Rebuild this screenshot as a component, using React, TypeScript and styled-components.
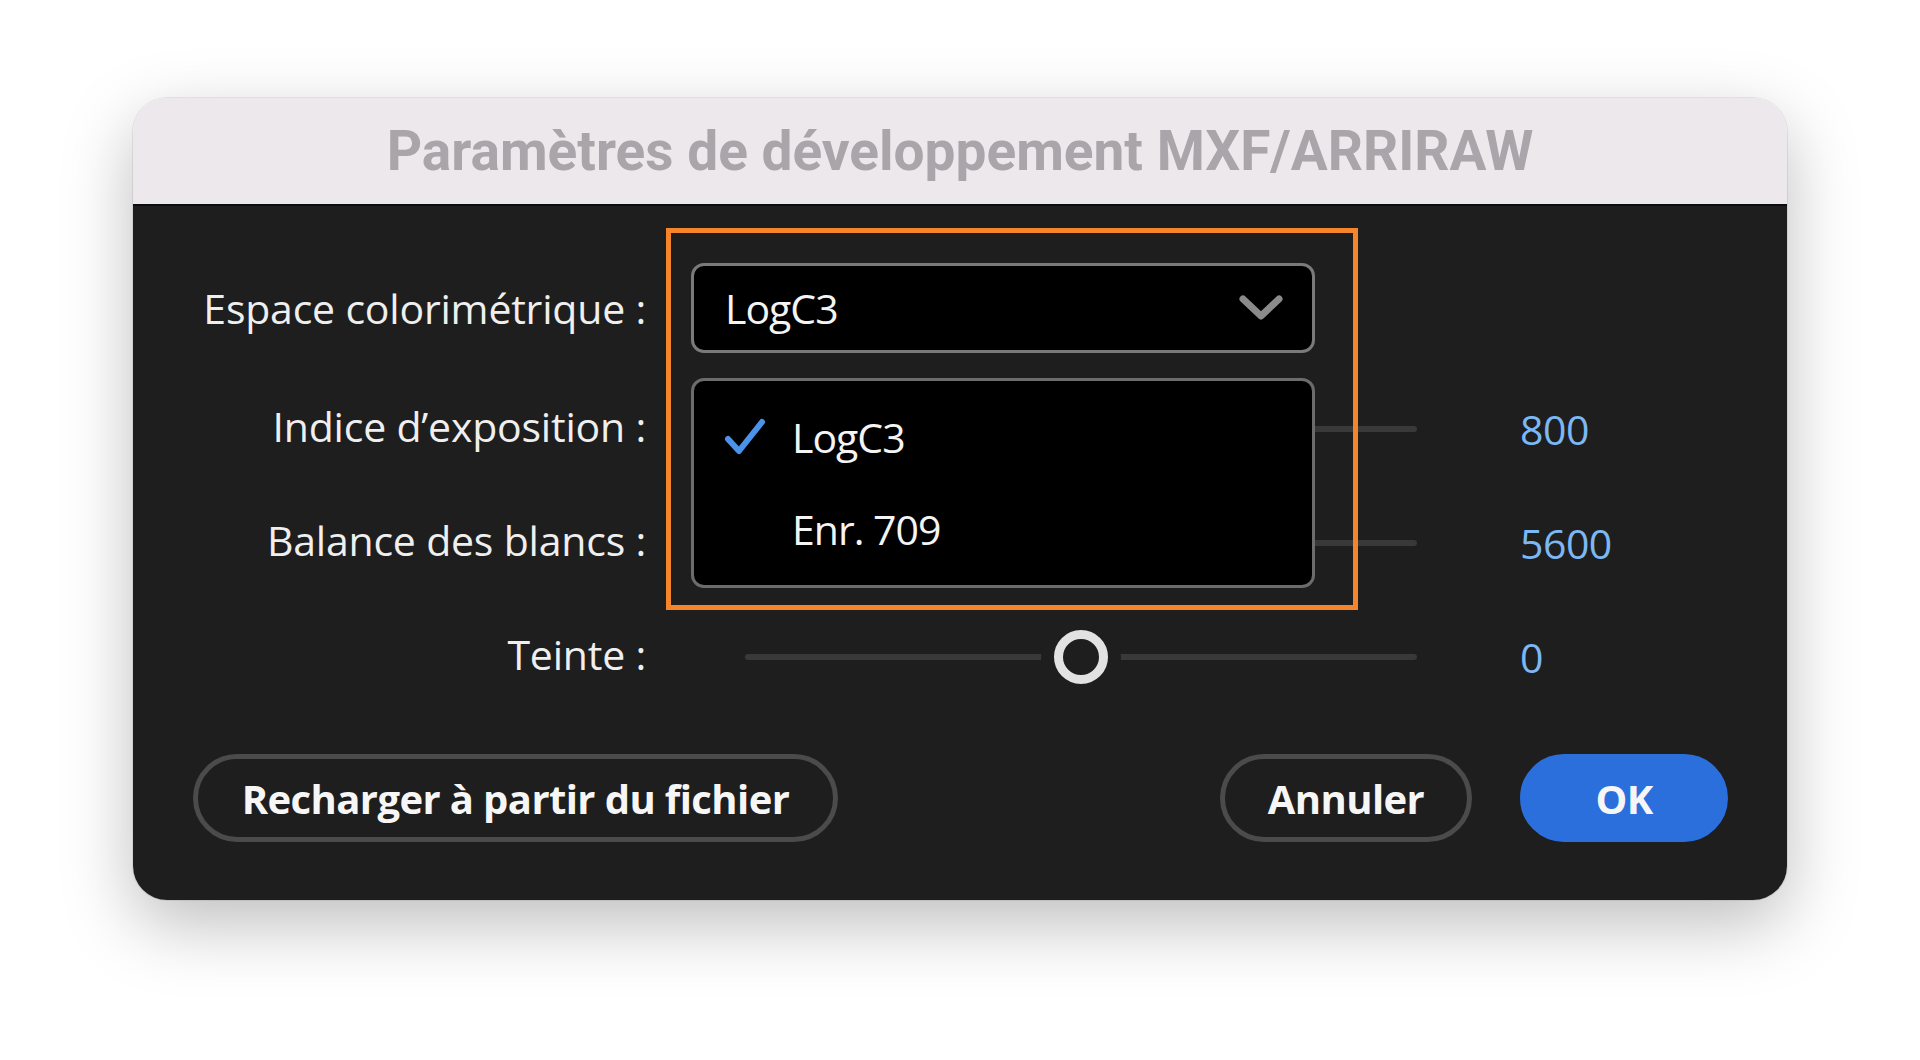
import styled, { createGlobalStyle } from "styled-components";

const GlobalStyle = createGlobalStyle`
	html, body {
		margin: 0;
		padding: 0;
		background: #ffffff;
	}
	#root {
		min-height: 1060px;
	}
`;

type SliderProps = {
	position: number;
};

function Slider(props: SliderProps) {
	return (
		<SliderTrack>
			<Thumb style={{ left: `${props.position}%` }} />
		</SliderTrack>
	);
}

function Chevron() {
	return (
		<svg width="44" height="26" viewBox="0 0 44 26">
			<polyline points="4,4 22,21 40,4" fill="none" stroke="#8b8b8b" strokeWidth="7" strokeLinecap="round" strokeLinejoin="round" />
		</svg>
	);
}

function Check() {
	return (
		<svg width="42" height="38" viewBox="0 0 42 38">
			<polyline points="4,21 15,33 38,4" fill="none" stroke="#4a92ea" strokeWidth="6" strokeLinecap="round" strokeLinejoin="round" />
		</svg>
	);
}

export default function App() {
	return (
		<>
			<GlobalStyle />
			<Page>
				<Window>
					<TitleBar>Paramètres de développement MXF/ARRIRAW</TitleBar>
					<Body>
						<Form>
							<Label>Espace colorimétrique :</Label>
							<SelectWrap>
								<Select>
									<SelectText>LogC3</SelectText>
									<Chevron />
								</Select>
								<Menu>
									<MenuItem>
										<CheckSlot>
											<Check />
										</CheckSlot>
										LogC3
									</MenuItem>
									<MenuItem>
										<CheckSlot />
										Enr. 709
									</MenuItem>
								</Menu>
								<Highlight />
							</SelectWrap>
							<span />

							<Label $lift>Indice d’exposition :</Label>
							<Slider position={50} />
							<Value>800</Value>

							<Label $lift>Balance des blancs :</Label>
							<Slider position={50} />
							<Value>5600</Value>

							<Label $lift>Teinte :</Label>
							<Slider position={50} />
							<Value>0</Value>
						</Form>
						<Actions>
							<PillButton $width={645}>Recharger à partir du fichier</PillButton>
							<ButtonGroup>
								<PillButton $width={252}>Annuler</PillButton>
								<PillButton $width={208} $primary>
									OK
								</PillButton>
							</ButtonGroup>
						</Actions>
					</Body>
				</Window>
			</Page>
		</>
	);
}

const Page = styled.div`
	display: flex;
	justify-content: center;
	padding-top: 98px;
	font-family: "Open Sans", "Noto Sans", sans-serif;
`;

const Window = styled.div`
	width: 1654px;
	border-radius: 34px;
	overflow: hidden;
	box-shadow: 0 24px 70px rgba(0, 0, 0, 0.26), 0 0 0 1px rgba(0, 0, 0, 0.07);
`;

const TitleBar = styled.div`
	height: 106px;
	background: #ece8ec;
	border-bottom: 2px solid #0d0d0d;
	display: flex;
	align-items: center;
	justify-content: center;
	font-family: Roboto, "Liberation Sans", sans-serif;
	font-weight: 700;
	font-size: 55px;
	color: #a9a5aa;
`;

const Body = styled.div`
	background: #1e1e1e;
	padding: 57px 59px 58px 60px;
	display: flex;
	flex-direction: column;
	gap: 59px;
`;

const Form = styled.div`
	display: grid;
	grid-template-columns: 498px 829px 1fr;
	grid-template-rows: 90px 76px 76px 76px;
	row-gap: 38px;
	align-items: center;
`;

const Label = styled.div<{ $lift?: boolean }>`
	padding-right: 45px;
	padding-bottom: ${(p) => (p.$lift ? "7px" : "0")};
	text-align: right;
	font-size: 41px;
	font-weight: 500;
	letter-spacing: -0.2px;
	color: #efefef;
	white-space: nowrap;
`;

const Value = styled.div`
	font-size: 41px;
	letter-spacing: -0.5px;
	color: #7cb8f3;
`;

const SelectWrap = styled.div`
	position: relative;
	width: 624px;
	height: 90px;
`;

const Select = styled.div`
	box-sizing: border-box;
	height: 90px;
	border: 3px solid #7a7a7a;
	border-radius: 13px;
	background: #000;
	display: flex;
	align-items: center;
	justify-content: space-between;
	padding: 0 29px 0 31px;
`;

const SelectText = styled.span`
	font-size: 41px;
	font-weight: 500;
	letter-spacing: -1px;
	color: #f4f4f4;
`;

const Menu = styled.div`
	position: absolute;
	top: 115px;
	left: 0;
	z-index: 2;
	box-sizing: border-box;
	width: 624px;
	height: 210px;
	padding-top: 10px;
	border: 3px solid #6c6c6c;
	border-radius: 13px;
	background: #000;
`;

const MenuItem = styled.div`
	height: 92px;
	display: flex;
	align-items: center;
	font-size: 41px;
	font-weight: 500;
	letter-spacing: -1px;
	color: #f4f4f4;
`;

const CheckSlot = styled.span`
	width: 98px;
	padding-left: 30px;
	box-sizing: border-box;
	display: flex;
	align-items: center;
`;

const Highlight = styled.div`
	position: absolute;
	top: -35px;
	left: -25px;
	z-index: 3;
	box-sizing: border-box;
	width: 692px;
	height: 382px;
	border: 5px solid #f6842a;
	pointer-events: none;
`;

const SliderTrack = styled.div`
	position: relative;
	height: 6px;
	margin: 0 103px 0 54px;
	border-radius: 3px;
	background: #393939;
`;

const Thumb = styled.div`
	position: absolute;
	top: 50%;
	width: 54px;
	height: 54px;
	box-sizing: border-box;
	transform: translate(-50%, -50%);
	border: 9px solid #e2e2e2;
	border-radius: 50%;
	background: #1e1e1e;
	box-shadow: 0 0 0 13px #1e1e1e;
`;

const Actions = styled.div`
	display: flex;
	justify-content: space-between;
	align-items: center;
`;

const ButtonGroup = styled.div`
	display: flex;
	gap: 48px;
`;

const PillButton = styled.button<{ $width: number; $primary?: boolean }>`
	width: ${(p) => p.$width}px;
	height: 88px;
	box-sizing: border-box;
	border-radius: 44px;
	border: 5px solid ${(p) => (p.$primary ? "#2b6fdd" : "#4b4b4b")};
	background: ${(p) => (p.$primary ? "#2b6fdd" : "transparent")};
	color: #f6f6f6;
	font-family: "Open Sans", "Noto Sans", sans-serif;
	font-weight: 700;
	font-size: 40px;
	letter-spacing: -0.6px;
	padding: 0;
	white-space: nowrap;
`;
